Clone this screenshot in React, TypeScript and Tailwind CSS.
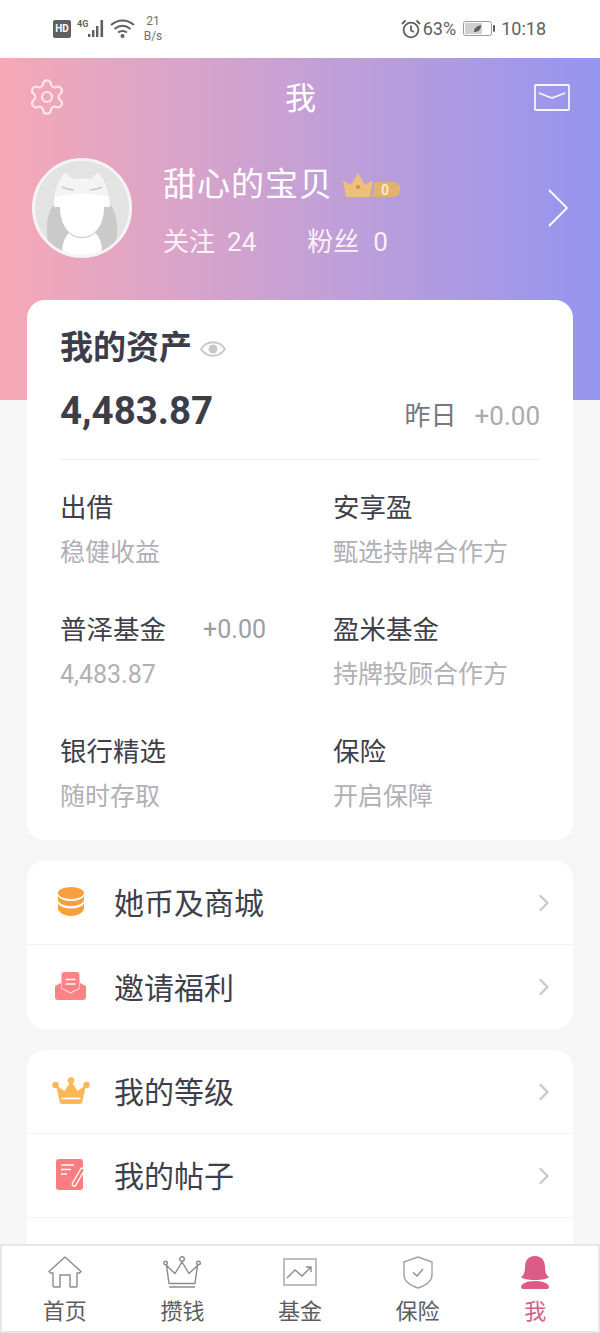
import React from 'react';
import { ChevronRight, Settings } from 'lucide-react';

const font = 'font-["Roboto","Noto_Sans_CJK_SC",sans-serif]';

const assets = [
  { title: '出借', sub: '稳健收益' },
  { title: '安享盈', sub: '甄选持牌合作方' },
  { title: '普泽基金', sub: '4,483.87', extra: '+0.00' },
  { title: '盈米基金', sub: '持牌投顾合作方' },
  { title: '银行精选', sub: '随时存取' },
  { title: '保险', sub: '开启保障' },
];

const CoinsIcon = () => (
  <svg width="26" height="29" viewBox="0 0 26 29">
    <ellipse cx="13" cy="6" rx="13" ry="6" fill="#fb9f3e" />
    <path d="M0 9c2 3.500 7 5 13 5s11-1.500 13-5v4.500c-1 3.500-7 5.500-13 5.500S1 17 0 13.500z" fill="#fb9f3e" />
    <path d="M0 16.500c2 3.500 7 5 13 5s11-1.500 13-5V22c-1 4-7 7-13 7S1 26 0 22z" fill="#fb9f3e" />
  </svg>
);

const InviteIcon = () => (
  <svg width="31" height="28" viewBox="0 0 31 28">
    <path d="M0 14l6-3v5.500l9.500 5 9.500-5V11l6 3v11a3 3 0 0 1-3 3H3a3 3 0 0 1-3-3z" fill="#fb8285" />
    <path d="M6.500 3a3 3 0 0 1 3-3h12a3 3 0 0 1 3 3v13l-9 4.500-9-4.500z" fill="#fb8285" />
    <path d="M10.500 7.500h10M10.500 12h10" stroke="#fff" strokeWidth="1.600" />
  </svg>
);

const CrownIcon = () => (
  <svg width="38" height="27" viewBox="0 0 38 27">
    <circle cx="3.500" cy="8" r="3.200" fill="#fdb755" />
    <circle cx="19" cy="3.500" r="3.200" fill="#fdb755" />
    <circle cx="34.500" cy="8" r="3.200" fill="#fdb755" />
    <path d="M4 8l8.500 6L19 4l6.500 10L34 8l-3.500 16a3 3 0 0 1-3 3h-17a3 3 0 0 1-3-3z" fill="#fdb755" />
    <path d="M9.500 21.500h19" stroke="#fff" strokeWidth="1.600" />
  </svg>
);

const PostIcon = () => (
  <svg width="29" height="31" viewBox="0 0 29 31">
    <rect x="0" y="0" width="27" height="31" rx="3" fill="#fb7d80" />
    <path d="M5 6h13M5 10.500h10M5 15h6" stroke="#fff" strokeWidth="1.500" />
    <path d="M25 9.500L16.500 24c-1 2.500 1.500 4 3 2.500L28 12c.8-2-2-4-3-2.500z" fill="#fb7d80" stroke="#fff" strokeWidth="1.400" />
  </svg>
);

const MenuRow = ({ icon, label, last }: { icon: React.ReactNode; label: string; last?: boolean }) => (
  <div className={`flex h-[84px] items-center ${last ? '' : 'border-b border-[#f3f3f3]'}`}>
    <div className="flex w-[87px] justify-center pb-[3px]">{icon}</div>
    <span className="mt-[3px] flex-1 text-[30px] leading-none text-[#3f3f4b]">{label}</span>
    <ChevronRight size={28} strokeWidth={2} className="mr-[15px] text-[#c9c9ce]" />
  </div>
);

const tabs = [
  {
    label: '首页',
    icon: (
      <svg width="34" height="32" viewBox="0 0 34 32" fill="none" stroke="#8b8b91" strokeWidth="1.400" strokeLinejoin="round">
        <path d="M1 15.500L17 1l16 14.500-1.500 1.500H29v13a1 1 0 0 1-1 1h-6V19H12v12H6a1 1 0 0 1-1-1V17H2.500z" />
      </svg>
    ),
  },
  {
    label: '攒钱',
    icon: (
      <svg width="38" height="32" viewBox="0 0 38 32" fill="none" stroke="#8b8b91" strokeWidth="1.400" strokeLinejoin="round">
        <circle cx="19" cy="3" r="2.300" />
        <circle cx="2.500" cy="7" r="1.800" />
        <circle cx="35.500" cy="7" r="1.800" />
        <path d="M3.500 9.500L12 17.500 19 6l7 11.500 8.500-8L32 27.500H6zM6 31h26" />
      </svg>
    ),
  },
  {
    label: '基金',
    icon: (
      <svg width="34" height="28" viewBox="0 0 34 28" fill="none" stroke="#a2a2a6" strokeWidth="1.400">
        <rect x="1" y="1" width="32" height="26" />
        <path d="M4 20l8-8 7 6 9-9M23 9h5v5" stroke="#8b8b91" />
      </svg>
    ),
  },
  {
    label: '保险',
    icon: (
      <svg width="32" height="33" viewBox="0 0 32 33" fill="none" stroke="#a2a2a6" strokeWidth="1.400" strokeLinejoin="round">
        <path d="M16 1l14 5v13c0 7-8 11-14 13C10 30 2 26 2 19V6z" />
        <path d="M11 16.500l4 3.500 6-7" stroke="#8b8b91" />
      </svg>
    ),
  },
  {
    label: '我',
    active: true,
    icon: (
      <svg width="30" height="33" viewBox="0 0 30 33" fill="#dc5c87">
        <path d="M15 0c7 0 10 5 10 11 0 5 1 8 4 10-2 2-6 3-14 3S3 23 1 21c3-2 4-5 4-10C5 5 8 0 15 0z" />
        <path d="M1 31c0-3 5-6 14-6s14 3 14 6c0 1-1 2-2 2H3c-1 0-2-1-2-2z" />
      </svg>
    ),
  },
];

const StatusBar = () => (
  <div className="flex h-[58px] items-center justify-between bg-white pl-[53px] pr-[54px] text-[#606060]">
    <div className="flex items-center">
      <span className="flex h-[18px] w-[18px] items-center justify-center rounded-[2px] bg-[#5f5f5f] text-[10px] font-bold leading-none text-white">HD</span>
      <svg width="62" height="20" viewBox="0 0 62 20" className="ml-[6px]">
        <text x="0" y="8" fontSize="9" fontWeight="700" fill="#5f5f5f">4G</text>
        <g fill="#5f5f5f">
          <rect x="11" y="15" width="2.400" height="3" />
          <rect x="15" y="11" width="2.400" height="7" />
          <rect x="19" y="7" width="2.400" height="11" />
          <rect x="23.500" y="1" width="2.600" height="17" />
        </g>
        <path d="M34 6c7-6 16-6 23 0M37.500 10c5-4 11-4 16 0M41 13.500c3-2 6-2 9 0" fill="none" stroke="#5f5f5f" strokeWidth="2" />
        <circle cx="45.500" cy="17" r="2" fill="#5f5f5f" />
      </svg>
      <div className="ml-[4px] flex w-[20px] flex-col items-center text-[12px] leading-[15px] text-[#707070]">
        <span>21</span>
        <span>B/s</span>
      </div>
    </div>
    <div className="flex items-center">
      <svg width="20" height="20" viewBox="0 0 20 20" fill="none" stroke="#5f5f5f" strokeWidth="1.800">
        <circle cx="10" cy="11" r="7.400" />
        <path d="M10 6.500V11.500l3 1.500M1 5l3.500-3.500M19 5l-3.500-3.500" />
      </svg>
      <span className="ml-[2px] text-[18px] leading-none">63%</span>
      <svg width="34" height="16" viewBox="0 0 34 16" className="ml-[7px]">
        <rect x="0.500" y="0.500" width="28" height="14" rx="2" fill="none" stroke="#9a9a9a" />
        <rect x="2" y="2" width="17" height="11" fill="#cfcfcf" />
        <path d="M11 11c0-4 3-6 7-7 0 5-3 7-7 7z" fill="#5f5f5f" />
        <rect x="30" y="4" width="2" height="7" rx="1" fill="#5f5f5f" />
      </svg>
      <span className="ml-[4px] text-[18px] leading-none">10:18</span>
    </div>
  </div>
);

const Avatar = () => (
  <div className="h-[100px] w-[100px] shrink-0 overflow-hidden rounded-full border-[3px] border-[#f5f3f5] bg-[#e3e3e3]">
    <svg width="94" height="94" viewBox="0 0 94 94">
      <path d="M18 44c-8 14-8 30-2 46h62c6-16 6-32-2-46z" fill="#cacaca" />
      <path d="M20 46c-2-12 1-24 10-35l8 7c6-1 12-1 18 0l7-7c9 11 12 23 10 35z" fill="#f4f4f4" />
      <path d="M20 36c17-4 37-4 54 0l1 10H19z" fill="#fff" />
      <path d="M25 46h44c0 18-9 30-22 30S25 64 25 46z" fill="#fff" />
      <path d="M34 72c4 4 8 5 13 5s9-1 13-5c5 4 7 10 7 22H27c0-12 3-18 7-22z" fill="#fff" />
      <path d="M27 26c4 2 8 3 12 3M67 26c-4 2-8 3-12 3" stroke="#cacaca" strokeWidth="1.500" fill="none" />
    </svg>
  </div>
);

const App: React.FC = () => {
  return (
    <div className={`flex h-[1333px] w-[600px] flex-col overflow-hidden bg-[#f6f6f6] ${font}`}>
      <StatusBar />

      <div className="min-h-0 flex-1 overflow-hidden">
        <div className="h-[342px] bg-gradient-to-r from-[#f6a8b6] to-[#9594ef] text-white">
          <div className="flex h-[78px] items-center justify-between pl-[27px] pr-[30px]">
            <Settings size={40} strokeWidth={1.3} className="text-[#fbe6ec]" />
            <span className="mt-[2px] text-[31px] leading-none">我</span>
            <svg width="36" height="27" viewBox="0 0 36 27" fill="none" stroke="#f8f4fb" strokeWidth="1.800">
              <rect x="1" y="1" width="34" height="25" rx="1" />
              <path d="M5 9l13 5 13-5" />
            </svg>
          </div>

          <div className="mt-[22px] flex items-center pl-[32px] pr-[31px]">
            <Avatar />
            <div className="ml-[31px] flex-1 pt-[5px]">
              <div className="flex items-center">
                <span className="text-[33px] leading-[44px] tracking-[1px]">甜心的宝贝</span>
                <svg width="60" height="28" viewBox="0 0 60 28" className="ml-[8px]">
                  <path d="M2 9l8 5 7-12 7 12 8-5-3 17H5z" fill="#ecc078" />
                  <circle cx="17" cy="16" r="2" fill="#d98a5a" />
                  <path d="M34 11h18a7 7 0 0 1 0 15H31z" fill="#e3b26c" />
                  <text x="40" y="23.500" fontSize="14" fontWeight="700" fill="#f7e9d0">0</text>
                </svg>
              </div>
              <div className="mt-[19px] flex text-[26px] leading-[32px] text-[#fbf0f5]">
                <span>关注</span>
                <span className="ml-[12px]">24</span>
                <span className="ml-[51px]">粉丝</span>
                <span className="ml-[14px]">0</span>
              </div>
            </div>
            <svg width="22" height="40" viewBox="0 0 22 40" fill="none" stroke="#fff" strokeWidth="1.800">
              <path d="M2 2l18 18L2 38" />
            </svg>
          </div>
        </div>

        <div className="mx-[27px] mt-[-100px] rounded-[18px] bg-white px-[33px] pt-[26px]">
          <div className="flex items-center">
            <span className="mt-[1px] text-[33px] font-bold leading-[42px] text-[#3d3d4a]">我的资产</span>
            <svg width="28" height="20" viewBox="0 0 28 20" className="ml-[7px] mt-[2px]" fill="none" stroke="#c8c8c8" strokeWidth="1.800">
              <path d="M2 10c6-9 18-9 24 0-6 9-18 9-24 0z" />
              <circle cx="14" cy="10" r="4.500" fill="#c8c8c8" stroke="none" />
            </svg>
          </div>
          <div className="mt-[17px] flex items-center justify-between border-b border-[#f1f1f1] pb-[23px]">
            <span className="text-[38.500px] font-bold leading-[50px] text-[#3d3d4a]">4,483.87</span>
            <div className="flex items-center pt-[10px] text-[26px] leading-[36px]">
              <span className="text-[#77777f]">昨日</span>
              <span className="ml-[18px] text-[#aaaab0]">+0.00</span>
            </div>
          </div>
          <div className="grid grid-cols-[273px_1fr] gap-y-[41px] pt-[30px]">
            {assets.map((item) => (
              <div key={item.title} className="w-[206px]">
                <div className="flex items-center justify-between text-[26.500px] leading-[36px]">
                  <span className="text-[#3f3f4b]">{item.title}</span>
                  {item.extra && <span className="text-[25px] text-[#9d9da5]">{item.extra}</span>}
                </div>
                <div className="mt-[9px] whitespace-nowrap text-[25px] leading-[36px] text-[#b0b0b6]">{item.sub}</div>
              </div>
            ))}
          </div>
          <div className="h-[25px]" />
        </div>

        <div className="mx-[27px] mt-[21px] rounded-[18px] bg-white">
          <MenuRow icon={<CoinsIcon />} label="她币及商城" />
          <MenuRow icon={<InviteIcon />} label="邀请福利" last />
        </div>

        <div className="mx-[27px] mt-[21px] rounded-[18px] bg-white">
          <MenuRow icon={<CrownIcon />} label="我的等级" />
          <MenuRow icon={<PostIcon />} label="我的帖子" />
          <div className="h-[84px]" />
        </div>
      </div>

      <div className="flex h-[89px] shrink-0 border-2 border-[#e6e6e6] bg-white px-[4px]">
        {tabs.map((tab) => (
          <div key={tab.label} className="flex flex-1 flex-col items-center">
            <div className="flex h-[42px] items-center justify-center pt-[10px]">{tab.icon}</div>
            <span className={`mt-[9px] text-[22px] leading-[30px] ${tab.active ? 'text-[#d2608a]' : 'text-[#5c5c64]'}`}>{tab.label}</span>
          </div>
        ))}
      </div>
    </div>
  );
};

export default App;
